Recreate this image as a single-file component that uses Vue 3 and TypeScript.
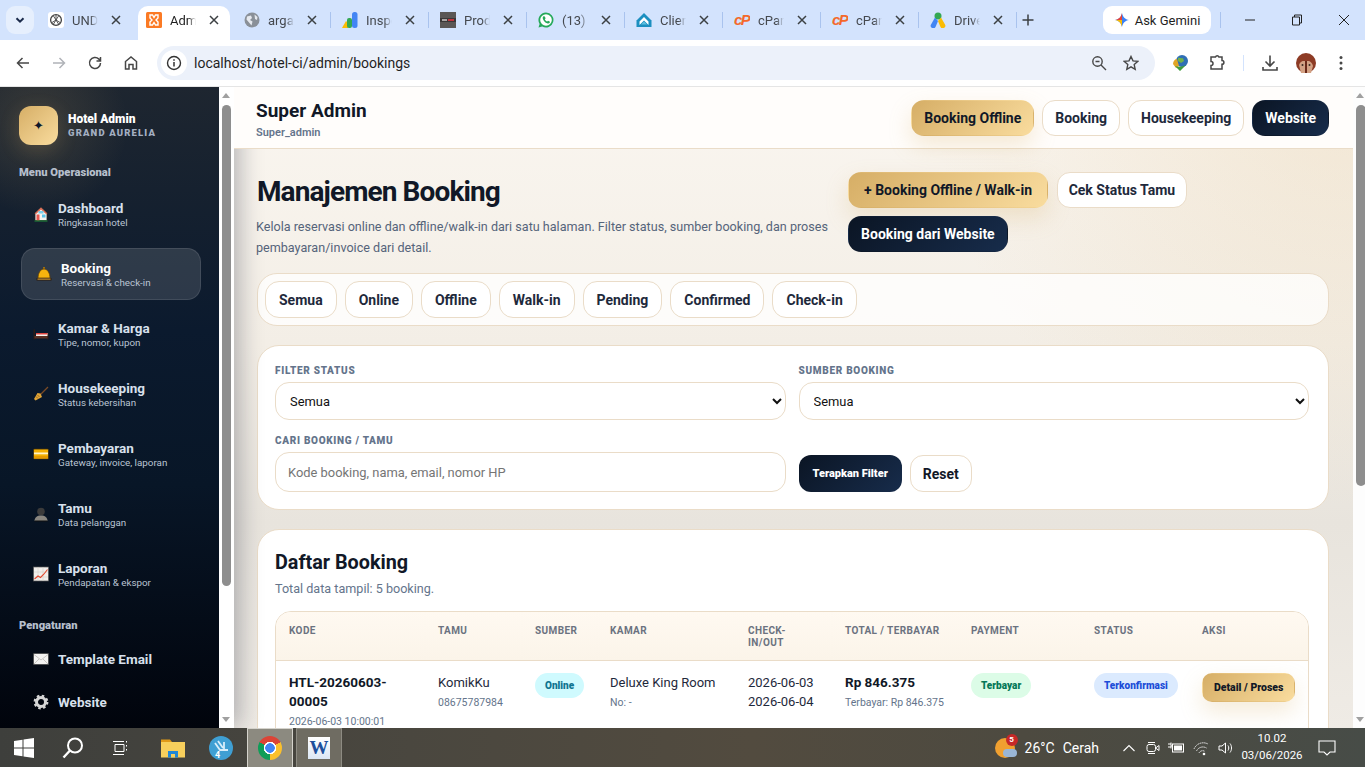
<script setup lang="ts">
import { ref } from 'vue'

interface Tab { icon: string; title: string; active?: boolean }
interface NavItem { icon: string; title: string; sub?: string; active?: boolean }

const tabs: Tab[] = [
  { icon: 'gpt', title: 'UNDANGAN' },
  { icon: 'xampp', title: 'Admin', active: true },
  { icon: 'globe', title: 'argaby' },
  { icon: 'bars', title: 'Inspect' },
  { icon: 'prod', title: 'Produk' },
  { icon: 'wa', title: '(13) WhatsApp' },
  { icon: 'client', title: 'Client' },
  { icon: 'cp', title: 'cPanel' },
  { icon: 'cp', title: 'cPanel' },
  { icon: 'drive', title: 'Drive' }
]

const navMain: NavItem[] = [
  { icon: 'house', title: 'Dashboard', sub: 'Ringkasan hotel' },
  { icon: 'bell', title: 'Booking', sub: 'Reservasi & check-in', active: true },
  { icon: 'bed', title: 'Kamar & Harga', sub: 'Tipe, nomor, kupon' },
  { icon: 'broom', title: 'Housekeeping', sub: 'Status kebersihan' },
  { icon: 'card', title: 'Pembayaran', sub: 'Gateway, invoice, laporan' },
  { icon: 'bust', title: 'Tamu', sub: 'Data pelanggan' },
  { icon: 'chart', title: 'Laporan', sub: 'Pendapatan & ekspor' }
]
const navSettings: NavItem[] = [
  { icon: 'mail', title: 'Template Email' },
  { icon: 'gear', title: 'Website' }
]

const filters = ['Semua', 'Online', 'Offline', 'Walk-in', 'Pending', 'Confirmed', 'Check-in']
const headers = ['Kode', 'Tamu', 'Sumber', 'Kamar', 'Check-in/out', 'Total / Terbayar', 'Payment', 'Status', 'Aksi']

const status = ref('Semua')
const source = ref('Semua')
const search = ref('')
</script>

<template>
  <div class="screen">
    <!-- browser tabs -->
    <div class="tabstrip">
      <div class="tab-search">
        <svg width="12" height="12" viewBox="0 0 12 12"><path d="M2.500 4.200 6 7.700l3.500-3.500" fill="none" stroke="#1b2a4a" stroke-width="2"/></svg>
      </div>
      <div class="tabs">
        <div v-for="(t, i) in tabs" :key="i" class="tab" :class="{ active: t.active }">
          <span class="favicon">
            <svg v-if="t.icon === 'gpt'" viewBox="0 0 16 16"><rect width="16" height="16" rx="3" fill="#fff"/><circle cx="8" cy="8" r="5.400" fill="none" stroke="#444" stroke-width="1.300"/><path d="M8 3v5l4 2.500M8 8l-4 2.500M5.500 4l5 8M10.500 4l-5 8" stroke="#444" stroke-width=".9" fill="none"/></svg>
            <svg v-else-if="t.icon === 'xampp'" viewBox="0 0 16 16"><rect width="16" height="16" rx="1.500" fill="#fb7a24"/><path d="M4 3h2.500L8 5.500 9.500 3H12v3l-2 2 2 2v3H9.500L8 10.500 6.500 13H4v-3l2-2-2-2z" fill="none" stroke="#fff" stroke-width="1.400"/></svg>
            <svg v-else-if="t.icon === 'globe'" viewBox="0 0 16 16"><circle cx="8" cy="8" r="7.500" fill="#8a9098"/><path d="M3 4.500 7 3.500l1 2.500-2 2 2.500 1.500-1 4L5 10.500 2.500 7.500zM10.500 2.500l3 2.500-.5 3-2-1z" fill="#e6e9ee"/></svg>
            <svg v-else-if="t.icon === 'bars'" viewBox="0 0 16 16"><path d="M0 16 4 9l2 2v5z" fill="#fbbc04"/><rect x="5" y="6" width="5" height="10" rx="2" fill="#34a853"/><rect x="10" y="0" width="5.500" height="16" rx="2.500" fill="#4285f4"/></svg>
            <svg v-else-if="t.icon === 'prod'" viewBox="0 0 16 16"><rect width="16" height="16" fill="#5a5655"/><rect y="6" width="16" height="4" fill="#3a3737"/><rect x="8" y="7" width="6" height="2" fill="#c0343c"/><rect x="2" y="7" width="5" height="2" fill="#a9a5a4"/></svg>
            <svg v-else-if="t.icon === 'wa'" viewBox="0 0 16 16"><path d="M8 .5a7.500 7.500 0 0 0-6.400 11.400L.5 15.500l3.700-1A7.500 7.500 0 1 0 8 .5z" fill="#25a95a"/><circle cx="8" cy="8" r="5.800" fill="#fff"/><path d="M5.500 4.300c-.8.700-1 1.800-.5 3 .7 1.800 2.300 3.400 4.100 4 1.200.4 2.200.1 2.800-.8l-.2-1-1.700-.8-.8.9c-1-.4-1.900-1.300-2.400-2.400l.8-.8-.7-1.800z" fill="#25a95a"/></svg>
            <svg v-else-if="t.icon === 'client'" viewBox="0 0 16 16"><path d="M8 1 .5 8.500V15h15V8.500z" fill="#1c8fc0"/><path d="M8 5 3.500 9.500V13L8 8.500l4.500 4.500V9.500z" fill="#fff"/><path d="M8 9.500 5 12.500h6z" fill="#5fc1e0"/></svg>
            <span v-else-if="t.icon === 'cp'" class="cp">cP</span>
            <svg v-else viewBox="0 0 16 16"><circle cx="8" cy="4" r="3.500" fill="#34a853"/><path d="M5 5.500 1 12.500a2.500 2.500 0 0 0 4.500 2.500L8 9z" fill="#4285f4"/><path d="M11 5.500 8 9l2.500 6a2.500 2.500 0 0 0 4.500-2.500z" fill="#fbbc04"/></svg>
          </span>
          <span class="tab-title">{{ t.title }}</span>
          <svg class="tab-x" width="10" height="10" viewBox="0 0 10 10"><path d="M1 1l8 8M9 1l-8 8" stroke="#3c4043" stroke-width="1.500"/></svg>
          <i v-if="i > 1" class="tab-sep"></i>
        </div>
      </div>
      <svg class="tab-plus" width="12" height="12" viewBox="0 0 12 12"><path d="M6 .5v11M.5 6h11" stroke="#3c4043" stroke-width="1.500"/></svg>
      <div class="gemini">
        <svg width="16" height="16" viewBox="0 0 16 16"><path d="M8 1c.6 3.800 3.200 6.400 7 7-3.800.6-6.400 3.200-7 7-.6-3.800-3.200-6.400-7-7 3.800-.6 6.400-3.200 7-7z" fill="#3b82f6"/><path d="M8 1C7.400 4.800 4.800 7.400 1 8l7 0z" fill="#ea4335"/><path d="M1 8c3.800.6 6.400 3.200 7 7V8z" fill="#fbbc04"/></svg>
        Ask Gemini
      </div>
      <i class="gem-sep"></i>
      <div class="win-btns">
        <svg width="12" height="12" viewBox="0 0 12 12"><path d="M1 6h10" stroke="#222" stroke-width="1"/></svg>
        <svg width="12" height="12" viewBox="0 0 12 12"><path d="M3.500 3V1h7v8H8.500M1.500 3h7v8h-7z" fill="none" stroke="#222" stroke-width="1"/></svg>
        <svg width="12" height="12" viewBox="0 0 12 12"><path d="M1 1l10 10M11 1 1 11" stroke="#222" stroke-width="1"/></svg>
      </div>
    </div>

    <!-- browser toolbar -->
    <div class="toolbar">
      <svg class="tb" viewBox="0 0 16 16"><path d="M14 8H2.500M7.500 3l-5 5 5 5" fill="none" stroke="#474747" stroke-width="1.500"/></svg>
      <svg class="tb" viewBox="0 0 16 16"><path d="M2 8h11.500M8.500 3l5 5-5 5" fill="none" stroke="#b0b3b8" stroke-width="1.500"/></svg>
      <svg class="tb" viewBox="0 0 16 16"><path d="M13.500 8a5.500 5.500 0 1 1-1.600-3.900L13.500 6M13.500 2v4h-4" fill="none" stroke="#474747" stroke-width="1.500"/></svg>
      <svg class="tb" viewBox="0 0 16 16"><path d="M2.500 14V6.500L8 2l5.500 4.500V14H10V9.500H6V14z" fill="none" stroke="#474747" stroke-width="1.500"/></svg>
      <div class="omnibox">
        <span class="site-info">
          <svg width="16" height="16" viewBox="0 0 16 16"><circle cx="8" cy="8" r="6.500" fill="none" stroke="#333" stroke-width="1.400"/><path d="M8 7v4.500M8 4.300v1.500" stroke="#333" stroke-width="1.500"/></svg>
        </span>
        <span class="url">localhost/hotel-ci/admin/bookings</span>
        <svg class="omni-ic" viewBox="0 0 16 16"><circle cx="6.500" cy="6.500" r="4.700" fill="none" stroke="#474747" stroke-width="1.400"/><path d="M10 10l5 5M4.500 6.500h4" stroke="#474747" stroke-width="1.400"/></svg>
        <svg class="omni-ic star" viewBox="0 0 16 16"><path d="M8 1.500l2 4.400 4.700.5-3.500 3.200 1 4.700L8 11.900l-4.200 2.400 1-4.700L1.300 6.400 6 5.900z" fill="none" stroke="#474747" stroke-width="1.400"/></svg>
      </div>
      <div class="tb-right">
        <svg class="ext idm" viewBox="0 0 18 18"><circle cx="10" cy="7" r="6" fill="#2f6fb5"/><path d="M6 4c2-1 3 1 5 0l1 3-3 2-3-2z" fill="#6fb24a"/><path d="M1 10c0-3 2-5 4-5l2 7-3 2z" fill="#e0a526"/><path d="M3 12c3 1 7 1 11-1l-6 6z" fill="#3f9b3c"/></svg>
        <svg class="ext puzzle" viewBox="0 0 18 18"><path d="M3 3h4.500a1.800 1.800 0 0 1 3.400 0H14v3.500a1.900 1.900 0 0 1 0 3.800V15H3v-3.500a2 2 0 0 0 0-4z" fill="none" stroke="#474747" stroke-width="1.500"/></svg>
        <i class="tb-sep"></i>
        <svg class="ext dl" viewBox="0 0 18 18"><path d="M9 1.500v10M4.500 7.500 9 12l4.500-4.500M2 13v3h14v-3" fill="none" stroke="#474747" stroke-width="1.600"/></svg>
        <svg class="ext avatar" viewBox="0 0 20 20"><circle cx="10" cy="10" r="10" fill="#8d3b25"/><path d="M3 12c1-3 3-4 4-4l6 0c2 1 3 2 4 5l-2 7H5z" fill="#d3a184"/><path d="M9 8h2v12H9z" fill="#6a2a1a"/><circle cx="6.500" cy="12" r="1" fill="#3b2a22"/><circle cx="13.500" cy="12" r="1" fill="#3b2a22"/></svg>
        <svg class="ext dots" viewBox="0 0 4 16"><circle cx="2" cy="2.500" r="1.500" fill="#474747"/><circle cx="2" cy="8" r="1.500" fill="#474747"/><circle cx="2" cy="13.500" r="1.500" fill="#474747"/></svg>
      </div>
    </div>

    <div class="viewport">
      <!-- sidebar -->
      <aside class="sidebar">
        <div class="side-inner">
          <div class="brand">
            <div class="brand-mark">✦</div>
            <div>
              <div class="brand-title">Hotel Admin</div>
              <div class="brand-sub">GRAND AURELIA</div>
            </div>
          </div>
          <div class="nav-label">Menu Operasional</div>
          <nav class="nav">
            <a v-for="n in navMain" :key="n.title" class="nav-item" :class="{ active: n.active }">
              <span class="nav-icon">
                <svg v-if="n.icon === 'house'" viewBox="0 0 16 16"><path d="M8 1.500 14 7v7.500H2V7z" fill="#f5f3f0" stroke="#222" stroke-width=".8"/><path d="M8 1.500 1.500 7.500 3 8l5-4.500L13 8l1.500-.5z" fill="#d9654d"/><rect x="3.500" y="8.500" width="3" height="6" fill="#e8584f"/><rect x="9" y="8.500" width="3.500" height="3" fill="#5cc4ea"/><rect x="5.500" y="5" width="5" height="2.500" fill="#79cdea"/><rect x="1.500" y="14.500" width="13" height="1" fill="#1f8f3a"/></svg>
                <svg v-else-if="n.icon === 'bell'" viewBox="0 0 16 16"><rect x="7" y="1" width="2" height="2.500" fill="#9c6d10"/><path d="M2 12c0-5 2.500-9 6-9s6 4 6 9z" fill="#f6b40e" stroke="#5e3f08" stroke-width=".8"/><rect x=".5" y="12" width="15" height="2.600" fill="#2e2114"/><rect x="1.500" y="12.600" width="13" height="1" fill="#e7a93b"/></svg>
                <svg v-else-if="n.icon === 'bed'" viewBox="0 0 16 16"><rect x=".5" y="3.500" width="1.500" height="10" fill="#2e1b14"/><rect x="14" y="7" width="1.500" height="6.500" fill="#2e1b14"/><rect x="1.500" y="10" width="13" height="2.500" fill="#5a2f22"/><rect x="3" y="7" width="11.500" height="3" fill="#f4f1ee"/><rect x="3" y="7" width="11.500" height="1.500" fill="#e1443f"/></svg>
                <svg v-else-if="n.icon === 'broom'" viewBox="0 0 16 16"><path d="M15 1 7 9" stroke="#7a4a26" stroke-width="1.300"/><path d="M7.500 7.500 4.500 7 1 13l1.500 1.500L9 11z" fill="#e0a436"/><path d="M3 10.500 5 12.500M4.500 9 6.500 11" stroke="#8a5a1c" stroke-width=".8"/></svg>
                <svg v-else-if="n.icon === 'card'" viewBox="0 0 16 16"><rect x=".5" y="3" width="15" height="10" rx="1" fill="#f4b000" stroke="#3a2c10" stroke-width=".8"/><rect x="1" y="6.500" width="14" height="1.800" fill="#fff3c6"/><rect x="1" y="10" width="14" height="2.500" fill="#e59a00"/></svg>
                <svg v-else-if="n.icon === 'bust'" viewBox="0 0 16 16"><circle cx="8" cy="5.500" r="3.800" fill="#3b3b3b"/><path d="M1.500 15c0-3.500 2.500-5.500 6.500-5.500s6.500 2 6.500 5.500z" fill="#8a8780"/><path d="M1.500 14.500h13V15.500h-13z" fill="#111"/></svg>
                <svg v-else viewBox="0 0 16 16"><rect x=".5" y="1" width="15" height="14" fill="#f2efec" stroke="#555" stroke-width=".7"/><path d="M5 1v14M10 1v14M1 6h14M1 11h14" stroke="#d5d0cb" stroke-width=".6"/><path d="M1.500 13 5 10l2.500 1.500L11 8l3.500-4.500" fill="none" stroke="#e2492f" stroke-width="1.100"/></svg>
              </span>
              <span class="nav-text">
                <span class="nav-title">{{ n.title }}</span>
                <small class="nav-sub">{{ n.sub }}</small>
              </span>
            </a>
          </nav>
          <div class="nav-label second">Pengaturan</div>
          <nav class="nav">
            <a v-for="n in navSettings" :key="n.title" class="nav-item single">
              <span class="nav-icon">
                <svg v-if="n.icon === 'mail'" viewBox="0 0 16 16"><rect x=".5" y="2.500" width="15" height="11" fill="#f4f3f1" stroke="#333" stroke-width=".6"/><path d="M1 3.500 8 9l7-5.500M1 13l5-5M15 13l-5-5" fill="none" stroke="#bdbab6" stroke-width=".8"/></svg>
                <svg v-else viewBox="0 0 16 16"><circle cx="8" cy="8" r="4.500" fill="none" stroke="#d6d6d6" stroke-width="3"/><circle cx="8" cy="8" r="6.300" fill="none" stroke="#d6d6d6" stroke-width="2.200" stroke-dasharray="2.500 2.450"/></svg>
              </span>
              <span class="nav-title">{{ n.title }}</span>
            </a>
          </nav>
        </div>
        <div class="scrollbar side-bar">
          <i class="arrow up"></i>
          <i class="thumb"></i>
          <i class="arrow down"></i>
        </div>
      </aside>

      <!-- main -->
      <main class="main">
        <header class="topbar">
          <div class="top-who">
            <div class="top-name">Super Admin</div>
            <div class="top-role">Super_admin</div>
          </div>
          <div class="top-actions">
            <a class="btn gold">Booking Offline</a>
            <a class="btn light">Booking</a>
            <a class="btn light">Housekeeping</a>
            <a class="btn navy">Website</a>
          </div>
        </header>

        <div class="content">
          <section class="page-head">
            <div>
              <h1>Manajemen Booking</h1>
              <p>Kelola reservasi online dan offline/walk-in dari satu halaman. Filter status, sumber booking, dan proses pembayaran/invoice dari detail.</p>
            </div>
            <div class="head-actions">
              <a class="btn gold">+ Booking Offline / Walk-in</a>
              <a class="btn light">Cek Status Tamu</a>
              <a class="btn navy">Booking dari Website</a>
            </div>
          </section>

          <section class="quick">
            <a v-for="f in filters" :key="f" class="btn light quick-btn">{{ f }}</a>
          </section>

          <section class="card filter-card">
            <label class="field">
              <span class="field-label">Filter Status</span>
              <select v-model="status"><option>Semua</option><option>Pending</option></select>
            </label>
            <label class="field">
              <span class="field-label">Sumber Booking</span>
              <select v-model="source"><option>Semua</option><option>Online</option></select>
            </label>
            <label class="field">
              <span class="field-label">Cari Booking / Tamu</span>
              <input v-model="search" type="text" placeholder="Kode booking, nama, email, nomor HP">
            </label>
            <div class="filter-actions">
              <button class="btn navy small">Terapkan Filter</button>
              <button class="btn light reset">Reset</button>
            </div>
          </section>

          <section class="card list-card">
            <h2>Daftar Booking</h2>
            <p class="list-sub">Total data tampil: 5 booking.</p>
            <div class="table-wrap">
              <table>
                <colgroup>
                  <col class="c1"><col class="c2"><col class="c3"><col class="c4"><col class="c5"><col class="c6"><col class="c7"><col class="c8"><col class="c9">
                </colgroup>
                <thead>
                  <tr><th v-for="h in headers" :key="h">{{ h }}</th></tr>
                </thead>
                <tbody>
                  <tr>
                    <td><strong>HTL-20260603-00005</strong><small>2026-06-03 10:00:01</small></td>
                    <td>KomikKu<small>08675787984</small></td>
                    <td><span class="pill online">Online</span></td>
                    <td>Deluxe King Room<small>No: -</small></td>
                    <td>2026-06-03<br>2026-06-04</td>
                    <td><strong>Rp 846.375</strong><small>Terbayar: Rp 846.375</small></td>
                    <td><span class="pill paid">Terbayar</span></td>
                    <td><span class="pill confirmed">Terkonfirmasi</span></td>
                    <td><a class="btn gold detail">Detail / Proses</a></td>
                  </tr>
                </tbody>
              </table>
            </div>
          </section>
        </div>
      </main>

      <div class="scrollbar main-bar">
        <i class="arrow up"></i>
        <i class="thumb"></i>
        <i class="arrow down"></i>
      </div>
    </div>

    <!-- windows taskbar -->
    <footer class="taskbar">
      <svg class="task-ic win" viewBox="0 0 20 20"><path d="M0 3l8.500-1.200v7.700H0zM9.500 1.600 20 0v9.500H9.500zM0 10.500h8.500v7.700L0 17zM9.500 10.500H20V20L9.500 18.400z" fill="#fff"/></svg>
      <svg class="task-ic search" viewBox="0 0 22 22"><circle cx="13" cy="8.500" r="7" fill="none" stroke="#fff" stroke-width="2"/><path d="M8 13.500 1.500 20.500" stroke="#fff" stroke-width="2.400"/></svg>
      <svg class="task-ic view" viewBox="0 0 16 16"><path d="M2 4.500h9v7H2zM0 1.500h11M0 14.500h11M13.500 1v1.500M13.500 5v1.500M13.500 9v1.500" fill="none" stroke="#fff" stroke-width="1"/></svg>
      <svg class="task-ic folder" viewBox="0 0 24 20"><path d="M0 1.500h9l2 2.500h12v3H0z" fill="#e09a18"/><rect y="4" width="24" height="15.500" fill="#f7cf5c"/><rect x="7" y="13" width="10" height="6.500" fill="#1f87d6"/><rect x="10" y="16" width="4" height="3.500" fill="#f7cf5c"/></svg>
      <span class="task-app">
        <svg viewBox="0 0 24 24"><circle cx="12" cy="12" r="12" fill="#3f9fd3"/><path d="M6 7l5 7h8M9 5l5 7M15 6v9" fill="none" stroke="#d8eefa" stroke-width="1.800"/></svg>
        <em>4</em>
      </span>
      <span class="task-tile chrome-tile"><i class="chrome"></i></span>
      <span class="task-tile word-tile"><span class="word">W</span></span>

      <div class="tray">
        <span class="weather">
          <i class="sun"></i><i class="cloud"></i><b>5</b>
        </span>
        <span class="temp">26°C</span>
        <span class="cond">Cerah</span>
        <svg class="tr chev" viewBox="0 0 14 14"><path d="M1.500 10 7 4.500 12.500 10" fill="none" stroke="#fff" stroke-width="1.100"/></svg>
        <svg class="tr cam" viewBox="0 0 14 16"><path d="M2 2.500h7M2 13.500h7" stroke="#fff" stroke-width="1"/><rect x="1" y="4.500" width="8.500" height="7" rx="2" fill="none" stroke="#fff"/><path d="M9.500 8 13 5.500v5z" fill="none" stroke="#fff"/></svg>
        <svg class="tr bat" viewBox="0 0 17 14"><path d="M0 3h3M0 6h3M3 1.500v6M3 5h2" stroke="#fff"/><rect x="4.500" y="3" width="11" height="8" fill="none" stroke="#fff"/><rect x="6" y="4.500" width="8" height="5" fill="#fff"/></svg>
        <svg class="tr wifi" viewBox="0 0 16 16"><path d="M1 9a10 10 0 0 1 14-5M3.500 11a7 7 0 0 1 10-3M6 13a4 4 0 0 1 6-1.500" fill="none" stroke="#e8e8e8" stroke-width="1" stroke-dasharray="1.500 .6"/><circle cx="11" cy="14" r="1.300" fill="#fff"/></svg>
        <svg class="tr vol" viewBox="0 0 16 16"><path d="M1 6h3l3.500-3v10L4 10H1zM10 5.500c1 1.500 1 3.500 0 5M12 3.500c2 2.500 2 6.500 0 9" fill="none" stroke="#fff"/></svg>
        <div class="clock"><span>10.02</span><span>03/06/2026</span></div>
        <svg class="tr notif" viewBox="0 0 18 18"><path d="M1 2h16v11h-5l-3 3-3-3H1z" fill="none" stroke="#fff" stroke-width="1.100"/></svg>
      </div>
    </footer>
  </div>
</template>

<style>
html, body { margin: 0; overflow: hidden; }
</style>

<style scoped>
.screen {
  width: 1365px;
  height: 767px;
  display: flex;
  flex-direction: column;
  overflow: hidden;
  font-family: Roboto, "Noto Sans", sans-serif;
  color: #0f172a;
}

/* chrome */
.tabstrip {
  height: 40px;
  flex: none;
  background: #d3e3fd;
  display: flex;
  align-items: flex-start;
  box-sizing: border-box;
  padding: 6px 0 0 6px;
}
.tab-search {
  width: 28px;
  height: 28px;
  margin-right: 6px;
  border-radius: 9px;
  background: #e6effd;
  display: flex;
  align-items: center;
  justify-content: center;
}
.tabs { display: flex; }
.tab {
  width: 98px;
  height: 34px;
  box-sizing: border-box;
  display: flex;
  align-items: center;
  padding: 0 0 6px 8px;
  font-size: 13px;
  color: #45494f;
  position: relative;
}
.tab.active {
  background: #fff;
  color: #1f1f1f;
  border-radius: 10px 10px 0 0;
  width: 92px;
  margin-right: 6px;
}
.favicon { width: 16px; height: 16px; flex: none; display: block; }
.favicon svg { width: 16px; height: 16px; display: block; }
.cp { font: italic 800 15px/16px "Liberation Sans", sans-serif; color: #f4692b; letter-spacing: -1.500px; display: block; overflow: hidden; }
.tab-title {
  margin: 0 13px 0 8px;
  width: 26px;
  overflow: hidden;
  white-space: nowrap;
  -webkit-mask-image: linear-gradient(90deg, #000 70%, transparent);
  mask-image: linear-gradient(90deg, #000 70%, transparent);
}
.tab-x { flex: none; }
.tab-sep {
  position: absolute;
  right: 3px;
  top: 6px;
  width: 1px;
  height: 16px;
  background: #a9c3ee;
}
.tab-plus { margin: 8px 0 0 2px; }
.gemini {
  margin-left: 69px;
  width: 108px;
  height: 28px;
  border-radius: 9px;
  background: #fff;
  display: flex;
  align-items: center;
  justify-content: center;
  gap: 5px;
  font-size: 13px;
  color: #1f1f1f;
}
.gem-sep { width: 1px; height: 16px; margin: 6px 0 0 9px; background: #a9c3ee; }
.win-btns {
  display: flex;
  gap: 35px;
  margin: 8px 0 0 23px;
}

.toolbar {
  height: 47px;
  flex: none;
  box-sizing: border-box;
  background: #fff;
  display: flex;
  align-items: center;
  padding: 0 0 1px 15px;
  border-bottom: 1px solid #e5e5e5;
}
.tb { width: 16px; height: 16px; margin-right: 20px; flex: none; }
.omnibox {
  margin-left: -2px;
  width: 998px;
  height: 34px;
  border-radius: 17px;
  background: #ecf1fa;
  display: flex;
  align-items: center;
  box-sizing: border-box;
  padding: 0 16px 0 4px;
  flex: none;
}
.site-info {
  width: 26px;
  height: 26px;
  border-radius: 50%;
  background: #fff;
  display: flex;
  align-items: center;
  justify-content: center;
}
.url { margin-left: 7px; font-size: 14px; color: #1f1f1f; flex: 1; }
.omni-ic { width: 16px; height: 16px; }
.omni-ic.star { margin-left: 16px; }
.tb-right { display: flex; align-items: center; flex: 1; padding-left: 17px; }
.ext { flex: none; }
.idm { width: 18px; height: 18px; }
.puzzle { width: 18px; height: 18px; margin-left: 18px; }
.tb-sep { width: 1px; height: 16px; background: #d3e3fd; margin: 0 17px; }
.dl { width: 18px; height: 18px; }
.avatar { width: 20px; height: 20px; margin-left: 17px; }
.dots { width: 4px; height: 16px; margin-left: 23px; }

/* page */
.viewport {
  height: 641px;
  flex: none;
  display: flex;
  overflow: hidden;
}
.sidebar {
  width: 234px;
  flex: none;
  display: flex;
  position: relative;
  z-index: 2;
  box-shadow: 6px 0 22px rgba(15, 23, 42, .28);
}
.side-inner {
  width: 219px;
  flex: none;
  box-sizing: border-box;
  padding: 19px 18px 0 19px;
  overflow: hidden;
  background:
    radial-gradient(circle at 38px 38px, rgba(214, 174, 102, .16), transparent 90px),
    linear-gradient(180deg, #1e2630 0%, #0b1a2e 38%, #081627 62%, #01040c 100%);
}
.brand { display: flex; align-items: center; gap: 10px; }
.brand-mark {
  width: 39px;
  height: 39px;
  border-radius: 12px;
  background: linear-gradient(135deg, #d6ae66, #f9dc9e);
  display: flex;
  align-items: center;
  justify-content: center;
  font: 13px/1 "DejaVu Sans", sans-serif;
  color: #0f172a;
  box-shadow: 0 6px 20px rgba(214, 174, 102, .18);
}
.brand-title { font-size: 12px; font-weight: 900; color: #fff; line-height: 14px; margin-top: -1px; }
.brand-sub { font-size: 9.500px; font-weight: 900; letter-spacing: 1.150px; color: #a4afc2; line-height: 12px; margin-top: 1px; }
.nav-label { font-size: 11.200px; font-weight: 900; color: #b6bfcc; margin-top: 21px; line-height: 14px; }
.nav-label.second { margin-top: 19px; }
.nav { display: flex; flex-direction: column; gap: 8px; margin-top: 8px; }
.nav-item {
  height: 52px;
  box-sizing: border-box;
  padding-left: 14px;
  border: 1px solid transparent;
  border-radius: 14px;
  display: flex;
  align-items: center;
  gap: 9px;
  width: 180px;
  margin-left: -1px;
  color: #d8e0ec;
}
.nav-item.active {
  transform: translateX(3px);
  background: rgba(255, 255, 255, .13);
  border-color: rgba(255, 255, 255, .1);
  color: #fff;
}
.nav-item.single { height: 35px; }
.nav-icon { width: 16px; height: 16px; flex: none; display: block; }
.nav-icon svg { width: 16px; height: 16px; display: block; }
.nav-text { display: flex; flex-direction: column; }
.nav-title { font-size: 13.500px; font-weight: 700; line-height: 16px; }
.nav-sub { font-size: 9.800px; line-height: 13px; color: #bac4d3; }

.scrollbar {
  flex: none;
  background: #fff;
  display: flex;
  flex-direction: column;
  align-items: flex-start;
}
.side-bar { width: 15px; padding-left: 3px; box-sizing: border-box; }
.main-bar { width: 12px; padding-left: 3px; box-sizing: border-box; background: #fdfdfd; }
.arrow {
  display: block;
  width: 0;
  height: 0;
  margin: 6px 0 0 0;
  border-left: 4.500px solid transparent;
  border-right: 4.500px solid transparent;
}
.arrow.up { border-bottom: 5px solid #a0a0a0; }
.arrow.down { border-top: 5px solid #a0a0a0; margin-top: auto; margin-bottom: 6px; }
.thumb { display: block; width: 9px; background: #8e8e8e; border-radius: 5px; margin-top: 7px; }
.side-bar .thumb { height: 481px; }
.main-bar .thumb { width: 10px; height: 381px; }

.main {
  flex: 1;
  min-width: 0;
  overflow: hidden;
  background:
    radial-gradient(circle at 100% 0, rgba(226, 196, 146, .28), transparent 420px),
    linear-gradient(180deg, #faf6f0 0%, #f3eee6 40%, #e8e4dd 68%, #efebe5 100%);
}
.topbar {
  height: 62px;
  box-sizing: border-box;
  position: relative;
  z-index: 3;
  padding: 0 24px 0 22px;
  display: flex;
  align-items: center;
  justify-content: space-between;
  background: #fffdfb;
  border-bottom: 1px solid #eadcc8;
}
.top-who { padding-top: 4px; }
.top-name { font-size: 19px; font-weight: 700; line-height: 24px; color: #111827; }
.top-role { font-size: 11px; font-weight: 600; color: #64748b; line-height: 14px; margin-top: 3px; }
.top-actions { display: flex; gap: 8px; align-items: center; }

.btn {
  box-sizing: border-box;
  height: 36px;
  padding: 0 12px;
  border-radius: 13px;
  display: inline-flex;
  align-items: center;
  justify-content: center;
  white-space: nowrap;
  font-family: inherit;
  font-size: 14px;
  font-weight: 700;
  border: 1px solid transparent;
  color: #1e293b;
}
.btn.gold {
  background: linear-gradient(135deg, #d6ae66, #f9dc9e);
  color: #111827;
  box-shadow: 0 10px 22px rgba(214, 174, 102, .25);
}
.btn.light { background: #fff; border-color: #eadcc8; }
.btn.navy { background: linear-gradient(135deg, #0b1524, #172c4b); color: #fff; }

.content { padding: 23px 24px 0 22px; }
.page-head {
  display: grid;
  grid-template-columns: 1.2fr 1fr;
  gap: 15px;
  align-items: start;
}
h1 { margin: 0 0 4px; font-size: 28px; line-height: 40px; font-weight: 700; color: #111827; padding-left: 1px; letter-spacing: -.9px; }
.page-head p { margin: 0; font-size: 12.600px; line-height: 21px; color: #55647a; }
.head-actions { display: flex; flex-wrap: wrap; gap: 8px 9px; }
.head-actions .gold { padding: 0 15px; }
.head-actions .light { padding: 0 10.500px; }

.quick {
  margin: 15px 0 0 1px;
  height: 53px;
  box-sizing: border-box;
  border: 1px solid #eadcc8;
  border-radius: 20px;
  background: rgba(255, 255, 255, .78);
  padding: 0 7px;
  display: flex;
  align-items: center;
  gap: 8px;
}
.quick-btn { height: 37px; border-radius: 14px; padding: 0 13px; }

.card {
  border: 1px solid #eadcc8;
  border-radius: 22px;
  background: #fff;
  box-sizing: border-box;
  margin-left: 1px;
}
.filter-card {
  margin-top: 19px;
  height: 165px;
  padding: 18px 19px 18px 17px;
  display: grid;
  grid-template-columns: 1fr 1fr;
  column-gap: 13px;
  row-gap: 14px;
}
.field { display: flex; flex-direction: column; gap: 6px; }
.field-label {
  font-size: 10px;
  line-height: 12px;
  height: 12px;
  padding-top: 1px;
  box-sizing: border-box;
  font-weight: 900;
  letter-spacing: .7px;
  text-transform: uppercase;
  color: #64748b;
}
select, input {
  box-sizing: border-box;
  width: 100%;
  border: 1px solid #eadcc8;
  border-radius: 14px;
  background: #fff;
  font-family: inherit;
  font-size: 12.900px;
  color: #111;
  outline: none;
}
select { height: 38px; padding: 1px 10px 0; }
input { height: 40px; padding: 0 12px; }
input::placeholder { color: #757575; }
.filter-actions { display: flex; align-items: flex-end; gap: 8px; }
.filter-actions .btn { height: 37px; cursor: pointer; }
.btn.small { font-size: 11px; font-weight: 900; padding: 0 14px; border: 0; border-radius: 12px; }
.reset { color: #111827; }

.list-card { margin-top: 19px; padding: 20px 19px 0 17px; height: 300px; }
h2 { margin: 0; font-size: 19.800px; line-height: 26px; font-weight: 700; color: #111827; }
.list-sub { margin: 4px 0 13px; font-size: 12.600px; line-height: 18px; color: #64748b; }
.table-wrap { border: 1px solid #eadcc8; border-radius: 16px; overflow: hidden; }
table { width: 100%; table-layout: fixed; border-collapse: collapse; }
.c1 { width: 149px; }
.c2 { width: 97px; }
.c3 { width: 75px; }
.c4 { width: 138px; }
.c5 { width: 97px; }
.c6 { width: 126px; }
.c7 { width: 123px; }
.c8 { width: 108px; }
th {
  height: 48px;
  box-sizing: border-box;
  padding: 13px 13px 11px;
  vertical-align: top;
  text-align: left;
  font-size: 10px;
  line-height: 12px;
  font-weight: 700;
  letter-spacing: .4px;
  text-transform: uppercase;
  color: #6b7280;
  background: linear-gradient(180deg, #fff9f1, #fbf4e9);
  border-bottom: 1px solid #eadcc8;
}
td {
  padding: 12px 13px;
  vertical-align: top;
  font-size: 13px;
  line-height: 19px;
  color: #1e293b;
  background: #fff;
}
td strong { display: block; font-size: 13.500px; font-weight: 700; color: #111827; }
td small { display: block; margin-top: 2px; font-size: 10.500px; line-height: 18px; color: #64748b; }
.pill {
  display: inline-flex;
  align-items: center;
  height: 25px;
  padding: 0 10px;
  border-radius: 13px;
  font-size: 10px;
  font-weight: 900;
  white-space: nowrap;
}
.online { background: #cffafe; color: #0e7490; }
.paid { background: #dcfce7; color: #047857; }
.confirmed { background: #dbeafe; color: #1d4ed8; }
.btn.detail { height: 29px; padding: 0 11px; font-size: 10.500px; font-weight: 900; border-radius: 10px; }

/* taskbar */
.taskbar {
  height: 39px;
  flex: none;
  display: flex;
  align-items: center;
  background: linear-gradient(90deg, #3e3f3c 0%, #4a473f 30%, #524b3f 55%, #4d4a40 75%, #474c47 100%);
  color: #fff;
}
.task-ic { flex: none; display: block; }
.win { width: 20px; height: 20px; margin-left: 14px; }
.search { width: 22px; height: 22px; margin-left: 28px; }
.view { width: 16px; height: 16px; margin-left: 29px; }
.folder { width: 24px; height: 20px; margin-left: 32px; }
.task-app { width: 24px; height: 24px; margin-left: 24px; position: relative; display: block; }
.task-app svg { width: 24px; height: 24px; display: block; }
.task-app em { position: absolute; left: 6px; bottom: 0; font-size: 9px; font-style: normal; font-weight: 700; }
.task-tile {
  height: 39px;
  width: 46px;
  box-sizing: border-box;
  display: flex;
  align-items: center;
  justify-content: center;
  border: 1px solid #a8a69e;
  border-bottom: 0;
}
.chrome-tile { margin-left: 14px; background: #8c8a80; border-color: #d5d3cc; }
.word-tile { margin-left: 3px; background: #6f6c62; border-color: #8d8b82; }
.chrome {
  display: block;
  width: 24px;
  height: 24px;
  border-radius: 50%;
  background:
    radial-gradient(circle, #4285f4 0 4.500px, #fff 5px 6px, transparent 6.500px),
    conic-gradient(from -60deg, #db4437 0 120deg, #fbc02d 120deg 240deg, #0f9d58 240deg 360deg);
}
.word {
  width: 22px;
  height: 22px;
  background: linear-gradient(180deg, #fff, #dbe6f4);
  color: #1d4f9c;
  font: 900 19px/22px "Liberation Serif", serif;
  text-align: center;
  display: block;
}
.tray {
  margin-left: auto;
  display: flex;
  align-items: center;
  height: 39px;
  font-size: 14px;
}
.weather { width: 23px; height: 24px; position: relative; display: block; }
.sun { position: absolute; left: 0; top: 2px; width: 20px; height: 20px; border-radius: 50%; background: #f0a030; }
.cloud { position: absolute; left: 8px; top: 13px; width: 14px; height: 8px; border-radius: 5px; background: #9ab6d6; }
.weather b {
  position: absolute;
  left: 11px;
  top: -2px;
  width: 12px;
  height: 12px;
  border-radius: 50%;
  background: #c62828;
  font-size: 8px;
  line-height: 12px;
  text-align: center;
}
.temp { margin-left: 7px; }
.cond { margin-left: 8px; }
.tr { flex: none; display: block; }
.chev { width: 14px; height: 14px; margin-left: 23px; }
.cam { width: 14px; height: 16px; margin-left: 10px; }
.bat { width: 17px; height: 14px; margin-left: 8px; }
.wifi { width: 16px; height: 16px; margin-left: 8px; }
.vol { width: 16px; height: 16px; margin-left: 9px; }
.clock {
  width: 70px;
  margin-left: 3px;
  display: flex;
  flex-direction: column;
  align-items: center;
  font-size: 11.500px;
  line-height: 17px;
  margin-top: -1px;
}
.notif { width: 18px; height: 18px; margin: 0 29px 0 11px; }
</style>
